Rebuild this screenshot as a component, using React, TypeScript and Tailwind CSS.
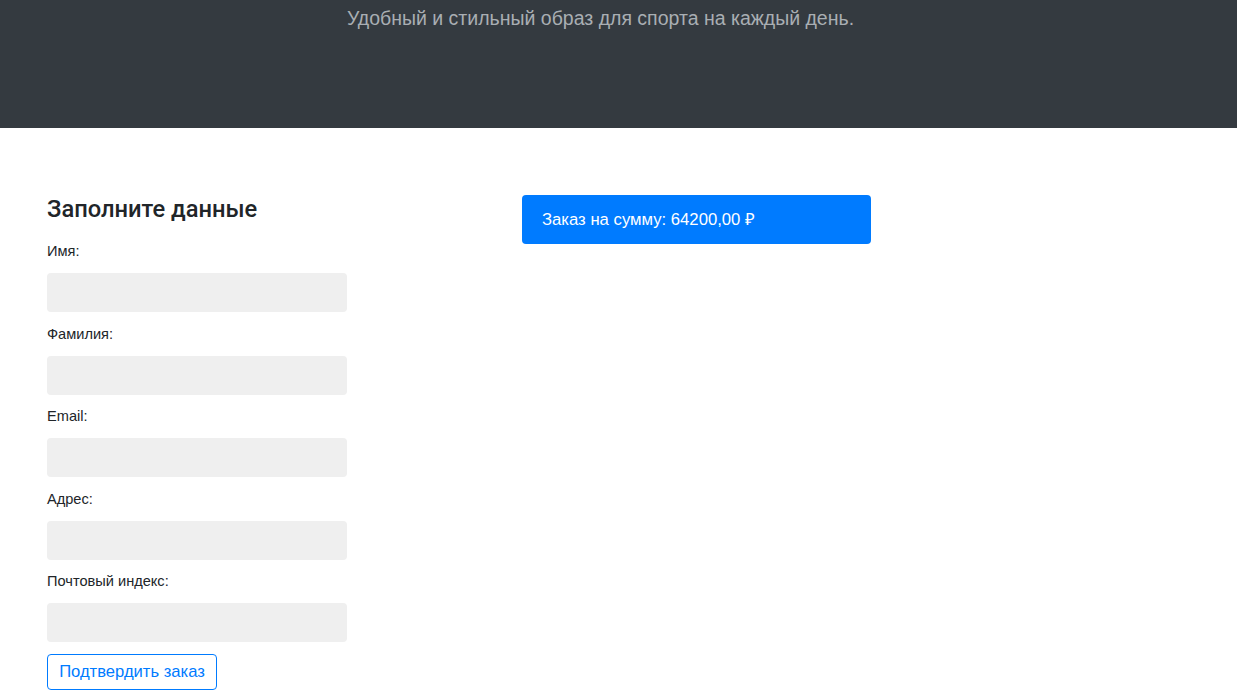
const fields = ["Имя:", "Фамилия:", "Email:", "Адрес:", "Почтовый индекс:"]

export default function App() {
  return (
    <div className="min-h-screen bg-white font-['Liberation_Sans',Arial,sans-serif] text-[#212529]">
      {/* Header */}
      <header className="h-[128px] bg-[#343a40] flex justify-center pt-[3px] pr-[36px]">
        <p className="text-[19.5px] leading-[30px] text-[#a9aeb3]">
          Удобный и стильный образ для спорта на каждый день.
        </p>
      </header>

      {/* Content */}
      <main className="flex pt-[67px] pl-[47px]">
        <form className="w-[300px] flex flex-col" onSubmit={(e) => e.preventDefault()}>
          <h2 className="font-['Roboto',sans-serif] text-[23.7px] leading-[29px] font-medium mb-[16px]">
            Заполните данные
          </h2>
          {fields.map((label) => (
            <div key={label} className="flex flex-col mb-[10.5px]">
              <label className="text-[14.6px] leading-[22px] mb-[11px]">{label}</label>
              <input className="h-[39px] w-full rounded-[4px] bg-[#efefef] outline-none px-3" />
            </div>
          ))}
          <button
            type="submit"
            className="mt-[1.5px] self-start h-[36px] w-[170px] rounded-[4px] border border-[#007bff] text-[#007bff] text-[16.6px]"
          >
            Подтвердить заказ
          </button>
        </form>

        <div className="ml-[175px]">
          <div className="w-[349px] h-[49px] rounded-[4px] bg-[#007bff] text-white text-[16.7px] flex items-center px-[20px] pt-[1px]">
            Заказ на сумму: 64200,00 ₽
          </div>
        </div>
      </main>
    </div>
  )
}
